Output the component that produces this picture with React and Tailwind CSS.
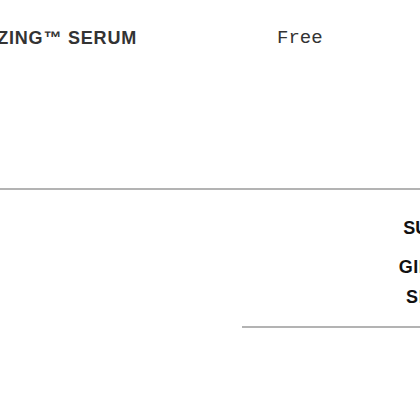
export default function App() {
  return (
    <div className="w-[420px] h-[420px] overflow-hidden bg-white font-['Liberation_Sans',Arial,sans-serif]">
      <div className="flex items-start pt-[27px] h-[188px]">
        <div className="w-[137px] shrink-0 flex justify-end">
          <span className="whitespace-nowrap text-[18px] leading-[22px] font-bold tracking-[0.8px] text-[#333]">
            AMAZING™ SERUM
          </span>
        </div>
        <div className="ml-[140px] font-['Courier_New','Liberation_Mono',monospace] text-[19px] leading-[24px] text-[#333] -mt-[1px]">
          Free
        </div>
      </div>
      <div className="h-[2px] bg-[#b3b3b3]" />
      <div className="flex">
        <div className="w-[242px] shrink-0" />
        <div className="w-[419px] shrink-0">
          <div className="pt-[27px] flex flex-col items-center text-[18px] leading-[22px] font-bold text-[#111]">
            <div className="whitespace-nowrap">SUBTOTAL</div>
            <div className="whitespace-nowrap mt-[17px] tracking-[0.5px]">GIFT WRAP</div>
            <div className="whitespace-nowrap mt-[8px] tracking-[0.6px]">SHIPPING</div>
          </div>
          <div className="mt-[18px] h-[2px] bg-[#b3b3b3]" />
        </div>
      </div>
    </div>
  );
}
